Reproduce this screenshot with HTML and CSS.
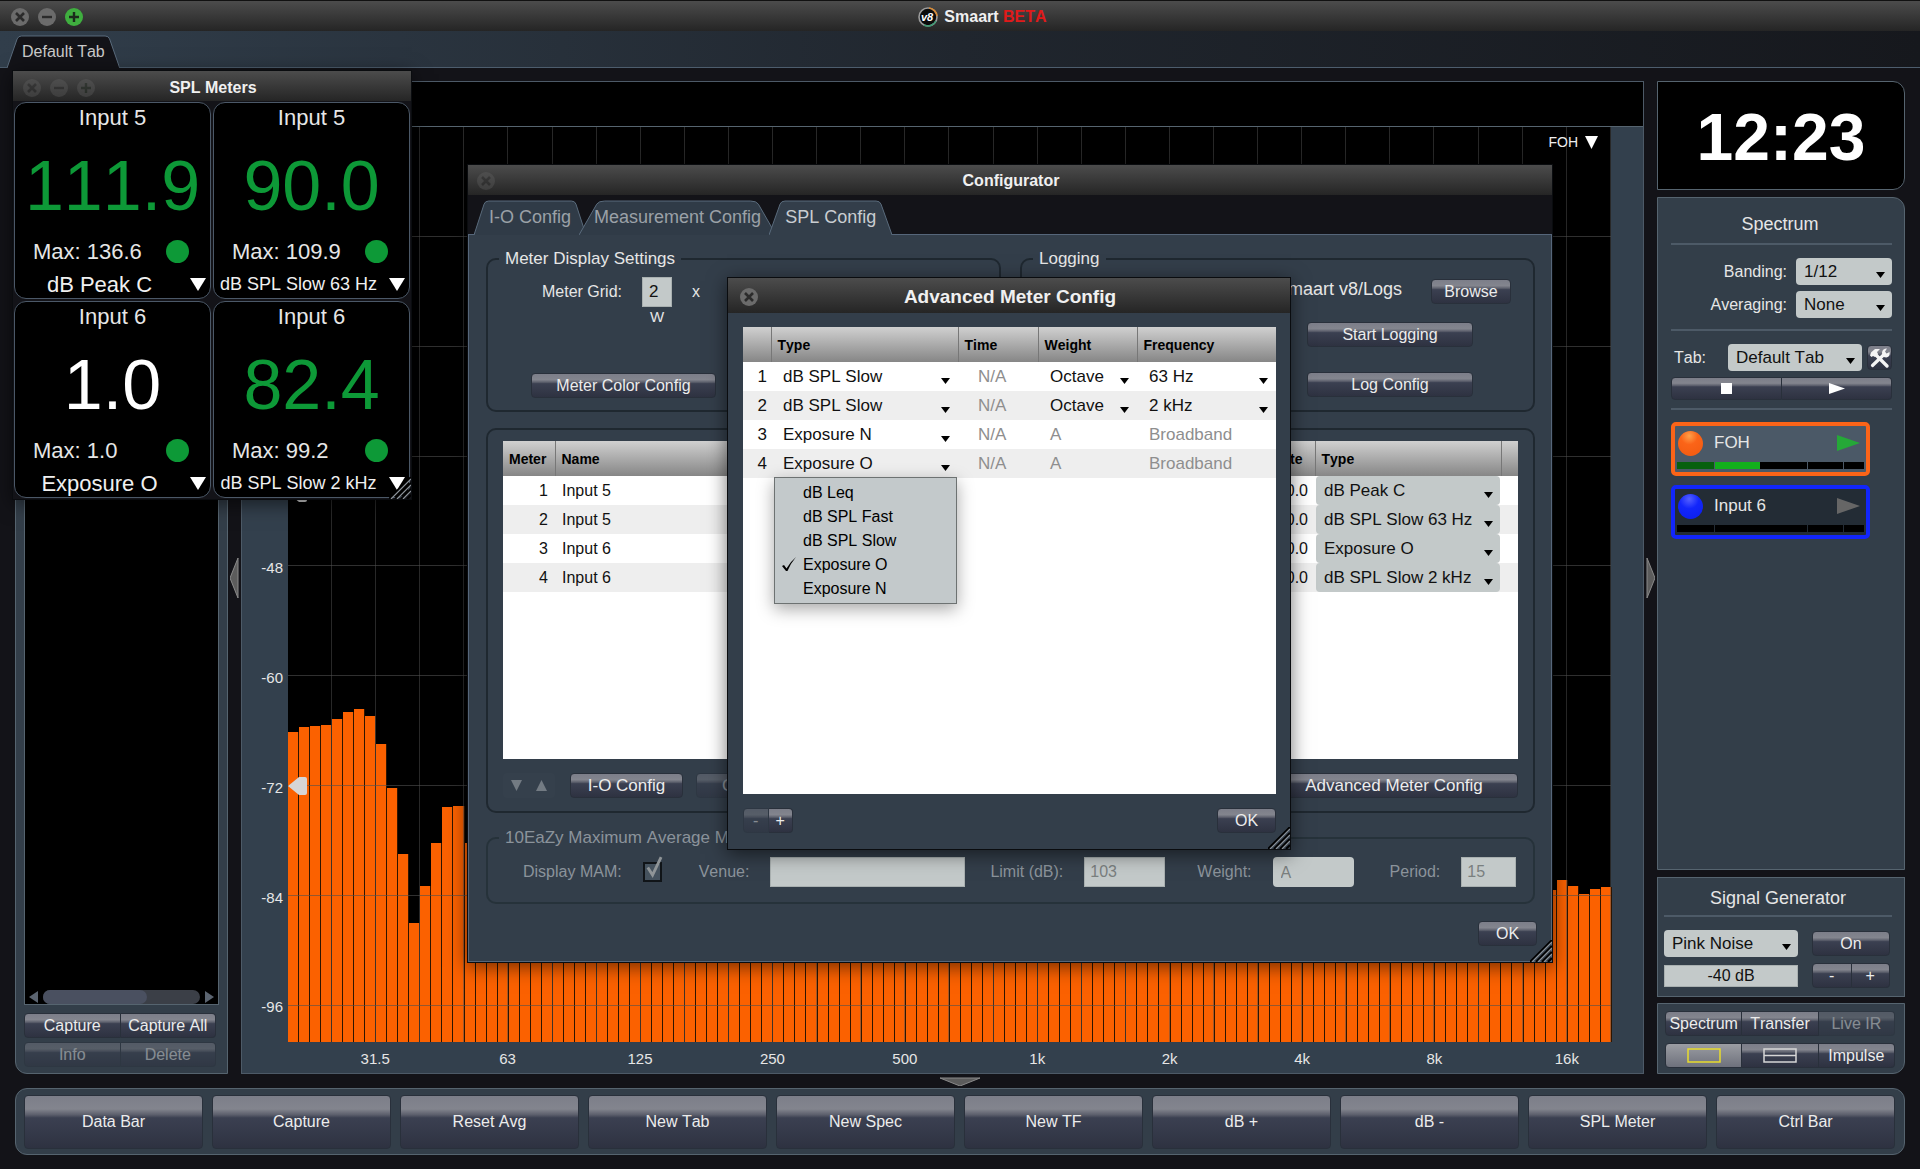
FILE: index.html
```html
<!DOCTYPE html>
<html lang="en">
<head>
    <meta charset="UTF-8">
    <meta name="viewport" content="width=device-width, initial-scale=1.0">
    <title>Smaart</title>
    <link rel="stylesheet" href="styles.css">
</head>
<body>
    <!-- shared icons -->
    <svg class="defs" width="0" height="0" aria-hidden="true">
        <symbol id="i-close" viewBox="0 0 18 18"><circle cx="9" cy="9" r="9" fill="currentColor"/><path d="M5 5l8 8M13 5l-8 8" stroke="#2b2b2b" stroke-width="2.6"/></symbol>
        <symbol id="i-min" viewBox="0 0 18 18"><circle cx="9" cy="9" r="9" fill="currentColor"/><path d="M4 9h10" stroke="#2b2b2b" stroke-width="2.4"/></symbol>
        <symbol id="i-max" viewBox="0 0 18 18"><circle cx="9" cy="9" r="9" fill="currentColor"/><path d="M4 9h10M9 4v10" stroke="#1c2b1c" stroke-width="2.4"/></symbol>
        <symbol id="i-grip" viewBox="0 0 22 22"><path d="M0 22L22 0M6 22L22 6M12 22L22 12M18 22L22 18" stroke="#000" stroke-width="2"/><path d="M2 22L22 2M8 22L22 8M14 22L22 14" stroke="#8d949b" stroke-width="1.2"/></symbol>
        <symbol id="i-tab" viewBox="0 0 100 34" preserveAspectRatio="none"><path d="M0 34L9 4Q10 1 13 1L87 1Q90 1 91 4L100 34" stroke="#5a6b7c" vector-effect="non-scaling-stroke"/></symbol>
    </svg>

    <div class="app">
        <header class="titlebar main-title">
            <div class="win-buttons">
                <button aria-label="Close"><svg><use href="#i-close"/></svg></button>
                <button aria-label="Minimize"><svg><use href="#i-min"/></svg></button>
                <button class="green" aria-label="Zoom"><svg><use href="#i-max"/></svg></button>
            </div>
            <svg class="logo" viewBox="0 0 22 22" aria-hidden="true">
                <circle cx="11" cy="11" r="9" fill="#0b0b0b" stroke="#9b9b9b" stroke-width="1.6"/>
                <path d="M12 2a9 9 0 0 1 8 8" fill="none" stroke="#d98a33" stroke-width="1.6"/>
                <path d="M19 15a9 9 0 0 1-12 4" fill="none" stroke="#3b9a72" stroke-width="1.6"/>
                <text x="10" y="15" text-anchor="middle">v8</text>
            </svg>
            <h1>Smaart <span>BETA</span></h1>
        </header>

        <nav class="tabbar">
            <button class="tab dark"><svg><use href="#i-tab"/></svg><span>Default Tab</span></button>
        </nav>

        <main class="workspace">
            <aside class="panel data-bar">
                <div class="data-list">
                    <div class="scrollbar">
                        <svg width="9" height="12"><path d="M9 0v12L0 6z" fill="#5b6470"/></svg>
                        <div class="track"><div class="thumb"></div></div>
                        <svg width="9" height="12"><path d="M0 0v12l9-6z" fill="#5b6470"/></svg>
                    </div>
                </div>
                <div class="btn-group"><button class="btn">Capture</button><button class="btn">Capture All</button></div>
                <div class="btn-group"><button class="btn" disabled>Info</button><button class="btn" disabled>Delete</button></div>
            </aside>

            <div class="splitter"><svg width="9" height="40"><path d="M8 0v40L0 20z" fill="#5c5c5c" stroke="#8a8a8a"/></svg></div>

            <section class="graph">
                <div class="cursor-strip"></div>
                <div class="plot-row">
                    <div class="y-axis" id="yAxis"></div>
                    <div class="plot">
                        <div class="bars" id="bars"></div>
                        <div class="grid-v" id="gridV"></div>
                        <div class="grid-h" id="gridH"></div>
                        <svg class="handle top-handle" viewBox="0 0 19 18"><path d="M0 9L11 0H17Q19 0 19 2V16Q19 18 17 18H11z" fill="#d6d6d6"/></svg>
                        <svg class="handle low-handle" viewBox="0 0 19 18"><path d="M0 9L11 0H17Q19 0 19 2V16Q19 18 17 18H11z" fill="#d6d6d6"/></svg>
                        <button class="trace-menu">FOH <svg width="13" height="13"><path d="M0 0h13L6.500 13z" fill="#fff"/></svg></button>
                    </div>
                    <div class="plot-margin"></div>
                </div>
                <div class="x-axis">
                    <span>31.5</span><span>63</span><span>125</span><span>250</span><span>500</span><span>1k</span><span>2k</span><span>4k</span><span>8k</span><span>16k</span>
                </div>
            </section>

            <div class="splitter"><svg width="9" height="40"><path d="M1 0v40l8-20z" fill="#5c5c5c" stroke="#8a8a8a"/></svg></div>

            <aside class="control-bar">
                <div class="clock">12:23</div>

                <section class="panel spectrum">
                    <h2>Spectrum</h2>
                    <hr>
                    <div class="field">
                        <label for="banding">Banding:</label>
                        <select id="banding"><option>1/12</option></select>
                    </div>
                    <div class="field">
                        <label for="averaging">Averaging:</label>
                        <select id="averaging"><option>None</option></select>
                    </div>
                    <hr>
                    <div class="field tab-field">
                        <label for="tabSelect">Tab:</label>
                        <select id="tabSelect"><option>Default Tab</option></select>
                        <button class="btn tools" aria-label="Settings">
                            <svg width="22" height="22" viewBox="0 0 22 22">
                                <path d="M6 7L18 19" stroke="#f4f4f4" stroke-width="3.400" stroke-linecap="round"/>
                                <path d="M1 8.500L2 5.500 6 2h5l-3 3 1 2-3 3-2-1-1.500 1z" fill="#f4f4f4"/>
                                <path d="M3.500 18.500L15 7.500" stroke="#f4f4f4" stroke-width="3.200" stroke-linecap="round"/>
                                <path d="M13 5.500Q13.500 1.500 18 1.500L16 4.500 17.500 6.500 20.500 5Q21.500 9.500 17.500 10.500 13 10.500 13 5.500z" fill="#f4f4f4"/>
                            </svg>
                        </button>
                    </div>
                    <div class="btn-group transport">
                        <button class="btn" aria-label="Stop"><svg width="11" height="11"><rect width="11" height="11" fill="#fff"/></svg></button>
                        <button class="btn" aria-label="Play"><svg width="16" height="11"><path d="M0 0v11l16-5.500z" fill="#fff"/></svg></button>
                    </div>
                    <hr>
                    <div class="channel orange">
                        <div class="channel-head">
                            <i class="ball"></i><span>FOH</span>
                            <svg width="23" height="16"><path d="M0 0v16l23-8z" fill="#25a838"/></svg>
                        </div>
                        <div class="level"><i class="low"></i><i class="mid"></i><i></i><i></i></div>
                    </div>
                    <div class="channel blue">
                        <div class="channel-head">
                            <i class="ball"></i><span>Input 6</span>
                            <svg width="23" height="16"><path d="M0 0v16l23-8z" fill="#666"/></svg>
                        </div>
                        <div class="level"><i></i><i></i><i></i><i></i></div>
                    </div>
                </section>

                <section class="panel generator">
                    <h2>Signal Generator</h2>
                    <hr>
                    <div class="gen-grid">
                        <select aria-label="Signal"><option>Pink Noise</option></select>
                        <button class="btn">On</button>
                        <input type="text" value="-40 dB" aria-label="Level">
                        <div class="btn-group"><button class="btn">-</button><button class="btn">+</button></div>
                    </div>
                </section>

                <section class="panel modes">
                    <div class="btn-group"><button class="btn">Spectrum</button><button class="btn">Transfer</button><button class="btn" disabled>Live IR</button></div>
                    <div class="btn-group">
                        <button class="btn active" aria-label="Single view"><svg width="34" height="16"><rect x="1" y="1" width="32" height="13" fill="none" stroke="#e8dc2c" stroke-width="1.500"/></svg></button>
                        <button class="btn" aria-label="Split view"><svg width="34" height="16"><path d="M1 1h32v13H1zM1 7.500h32" fill="none" stroke="#d6d6d6" stroke-width="1.500"/></svg></button>
                        <button class="btn">Impulse</button>
                    </div>
                </section>
            </aside>
        </main>

        <div class="bottom-splitter"><svg width="40" height="9"><path d="M0 1h40L20 9z" fill="#5c5c5c" stroke="#8a8a8a"/></svg></div>

        <footer class="panel command-bar">
            <button class="btn">Data Bar</button>
            <button class="btn">Capture</button>
            <button class="btn">Reset Avg</button>
            <button class="btn">New Tab</button>
            <button class="btn">New Spec</button>
            <button class="btn">New TF</button>
            <button class="btn">dB +</button>
            <button class="btn">dB -</button>
            <button class="btn">SPL Meter</button>
            <button class="btn">Ctrl Bar</button>
        </footer>
    </div>

    <!-- SPL meters window -->
    <div class="window spl-window">
        <div class="titlebar inactive">
            <div class="win-buttons">
                <button aria-label="Close"><svg><use href="#i-close"/></svg></button>
                <button aria-label="Minimize"><svg><use href="#i-min"/></svg></button>
                <button aria-label="Zoom"><svg><use href="#i-max"/></svg></button>
            </div>
            <h2>SPL Meters</h2>
        </div>
        <div class="meters">
            <div class="meter">
                <div class="name">Input 5</div>
                <div class="value">111.9</div>
                <div class="max">Max: 136.6<i></i></div>
                <select aria-label="Meter 1 type"><option>dB Peak C</option></select>
            </div>
            <div class="meter">
                <div class="name">Input 5</div>
                <div class="value">90.0</div>
                <div class="max">Max: 109.9<i></i></div>
                <select class="small" aria-label="Meter 2 type"><option>dB SPL Slow 63 Hz</option></select>
            </div>
            <div class="meter">
                <div class="name">Input 6</div>
                <div class="value white">1.0</div>
                <div class="max">Max: 1.0<i></i></div>
                <select aria-label="Meter 3 type"><option>Exposure O</option></select>
            </div>
            <div class="meter">
                <div class="name">Input 6</div>
                <div class="value">82.4</div>
                <div class="max">Max: 99.2<i></i></div>
                <select class="small" aria-label="Meter 4 type"><option>dB SPL Slow 2 kHz</option></select>
            </div>
        </div>
        <svg class="grip"><use href="#i-grip"/></svg>
    </div>

    <!-- Configurator window -->
    <div class="window config-window">
        <div class="titlebar inactive">
            <div class="win-buttons"><button aria-label="Close"><svg><use href="#i-close"/></svg></button></div>
            <h2>Configurator</h2>
        </div>
        <nav class="config-tabs">
            <button class="tab"><svg><use href="#i-tab"/></svg><span>I-O Config</span></button>
            <button class="tab"><svg><use href="#i-tab"/></svg><span>Measurement Config</span></button>
            <button class="tab current"><svg><use href="#i-tab"/></svg><span>SPL Config</span></button>
        </nav>
        <div class="config-body">
            <div class="top-groups">
                <fieldset>
                    <legend>Meter Display Settings</legend>
                    <div class="meter-grid">
                        <label for="gridW">Meter Grid:</label>
                        <div class="dim"><input type="text" id="gridW" value="2"><span>W</span></div>
                        <span>x</span>
                    </div>
                    <button class="btn color-btn">Meter Color Config</button>
                </fieldset>
                <fieldset>
                    <legend>Logging</legend>
                    <div class="log-path"><span>~/Documents/Smaart v8/Logs</span><button class="btn">Browse</button></div>
                    <button class="btn log-btn">Start Logging</button>
                    <button class="btn log-btn last">Log Config</button>
                </fieldset>
            </div>

            <div class="group">
                <div class="table-box">
                    <table class="meter-table">
                        <colgroup><col class="c-num"><col class="c-name"><col><col class="c-type"><col class="c-end"></colgroup>
                        <thead><tr><th>Meter</th><th>Name</th><th class="right">Calibrate</th><th>Type</th><th></th></tr></thead>
                        <tbody>
                            <tr><td class="right">1</td><td>Input 5</td><td class="right">100.0</td><td><select aria-label="Type 1"><option>dB Peak C</option></select></td><td></td></tr>
                            <tr><td class="right">2</td><td>Input 5</td><td class="right">100.0</td><td><select aria-label="Type 2"><option>dB SPL Slow 63 Hz</option></select></td><td></td></tr>
                            <tr><td class="right">3</td><td>Input 6</td><td class="right">100.0</td><td><select aria-label="Type 3"><option>Exposure O</option></select></td><td></td></tr>
                            <tr><td class="right">4</td><td>Input 6</td><td class="right">100.0</td><td><select aria-label="Type 4"><option>dB SPL Slow 2 kHz</option></select></td><td></td></tr>
                        </tbody>
                    </table>
                </div>
                <div class="table-actions">
                    <div class="btn-group faint">
                        <button class="btn" disabled aria-label="Move down"><svg width="11" height="11"><path d="M0 0h11L5.500 11z" fill="#fff"/></svg></button>
                        <button class="btn" disabled aria-label="Move up"><svg width="11" height="11"><path d="M0 11h11L5.500 0z" fill="#fff"/></svg></button>
                    </div>
                    <button class="btn io-btn">I-O Config</button>
                    <button class="btn cal-btn" disabled>Calibrate</button>
                    <button class="btn adv-btn">Advanced Meter Config</button>
                </div>
            </div>

            <fieldset class="mam" disabled>
                <legend>10EaZy Maximum Average Manager</legend>
                <div class="mam-row">
                    <label for="mam">Display MAM:</label>
                    <span class="check"><input type="checkbox" id="mam" checked><svg viewBox="0 0 20 24"><path d="M4 12l5 8L18 1" fill="none" stroke="#8f9497" stroke-width="3"/></svg></span>
                    <label for="venue">Venue:</label><input type="text" id="venue" class="w-venue">
                    <label for="limit">Limit (dB):</label><input type="text" id="limit" class="w-limit" value="103">
                    <label for="weight">Weight:</label><select id="weight"><option>A</option></select>
                    <label for="period">Period:</label><input type="text" id="period" class="w-period" value="15">
                </div>
            </fieldset>
            <button class="btn ok">OK</button>
        </div>
        <svg class="grip"><use href="#i-grip"/></svg>
    </div>

    <!-- Advanced meter config dialog -->
    <div class="window adv-window">
        <div class="titlebar">
            <div class="win-buttons"><button aria-label="Close"><svg><use href="#i-close"/></svg></button></div>
            <h2>Advanced Meter Config</h2>
        </div>
        <div class="adv-body">
            <div class="table-box">
                <table class="adv-table">
                    <colgroup><col class="a-num"><col class="a-type"><col class="a-time"><col class="a-weight"><col></colgroup>
                    <thead><tr><th></th><th>Type</th><th>Time</th><th>Weight</th><th>Frequency</th></tr></thead>
                    <tbody>
                        <tr><td>1</td><td><select aria-label="Type 1"><option>dB SPL Slow</option></select></td><td class="off time">N/A</td><td><select aria-label="Weight 1"><option>Octave</option></select></td><td><select aria-label="Frequency 1"><option>63 Hz</option></select></td></tr>
                        <tr><td>2</td><td><select aria-label="Type 2"><option>dB SPL Slow</option></select></td><td class="off time">N/A</td><td><select aria-label="Weight 2"><option>Octave</option></select></td><td><select aria-label="Frequency 2"><option>2 kHz</option></select></td></tr>
                        <tr><td>3</td><td><select aria-label="Type 3"><option>Exposure N</option></select></td><td class="off time">N/A</td><td class="off">A</td><td class="off">Broadband</td></tr>
                        <tr><td>4</td><td><select aria-label="Type 4"><option>Exposure O</option></select></td><td class="off time">N/A</td><td class="off">A</td><td class="off">Broadband</td></tr>
                    </tbody>
                </table>
                <ul class="menu" role="listbox">
                    <li>dB Leq</li>
                    <li>dB SPL Fast</li>
                    <li>dB SPL Slow</li>
                    <li class="checked"><svg viewBox="0 0 14 15"><path d="M0 9l2-1 2.500 3.500Q8 5 14 0 8.500 6.500 5.500 14H4z"/></svg>Exposure O</li>
                    <li>Exposure N</li>
                </ul>
            </div>
            <div class="adv-footer">
                <div class="btn-group"><button class="btn" disabled>-</button><button class="btn">+</button></div>
                <button class="btn">OK</button>
            </div>
        </div>
        <svg class="grip"><use href="#i-grip"/></svg>
    </div>

    <script src="script.js"></script>
</body>
</html>
```
FILE: styles.css
```css
* {
    box-sizing: border-box;
    font-kerning: none;
}

body {
    margin: 0;
    background-color: #131318;
    color: #e6e6e6;
    font-family: "Liberation Sans", Arial, sans-serif;
    font-size: 16px;
}

h1, h2 {
    margin: 0;
    font-size: 16px;
}

button, input, select {
    font-family: inherit;
    font-size: inherit;
    margin: 0;
}

svg {
    display: block;
}

.defs {
    position: absolute;
}

.app {
    display: flex;
    flex-direction: column;
    min-height: 100vh;
    padding-bottom: 14px;
}

/* title bars */
.titlebar {
    position: relative;
    display: flex;
    align-items: center;
    justify-content: center;
    height: 30px;
    flex: none;
    padding-top: 2px;
    background: linear-gradient(#4c4c4c, #252525);
    color: #f0f0f0;
}

.main-title {
    height: 31px;
    gap: 5px;
    padding-left: 44px;
    border-top: 1px solid #111;
}

.main-title span {
    color: #e01a1a;
}

.logo {
    width: 22px;
    height: 22px;
}

.logo text {
    font-size: 11px;
    font-weight: bold;
    font-style: italic;
    fill: #fff;
}

.win-buttons {
    position: absolute;
    left: 11px;
    display: flex;
    gap: 9px;
}

.win-buttons button {
    width: 18px;
    height: 18px;
    padding: 0;
    border: none;
    background: none;
    color: #6b6b6b;
}

.win-buttons .green {
    color: #3fae3f;
}

.win-buttons svg {
    width: 18px;
    height: 18px;
}

.inactive .win-buttons {
    opacity: 0.3;
}

/* tabs */
.tabbar {
    display: flex;
    align-items: flex-end;
    height: 37px;
    padding-left: 7px;
    background: linear-gradient(90deg, #313e4b, #20262e 50%, #16181d);
    border-bottom: 1px solid #4d5d6d;
}

.tab {
    position: relative;
    height: 35px;
    padding: 0 15px;
    margin-bottom: -1px;
    border: none;
    background: none;
    color: #9ba1a7;
    font-size: 18px;
}

.tab svg {
    position: absolute;
    left: 0;
    top: 0;
    width: 100%;
    height: 100%;
    fill: #303b47;
}

.tab span {
    position: relative;
}

.tab.dark {
    height: 33px;
    color: #c9c9c9;
    font-size: 16px;
}

.tab.dark svg {
    fill: #131318;
}

.tab.current {
    padding: 0 16px;
    color: #c9cdd1;
    z-index: 1;
}

.tab.current svg {
    fill: #333e4a;
}

/* main area */
.workspace {
    display: flex;
    flex: 1;
    padding: 13px 15px 0;
}

.panel {
    background-color: #333e49;
    border: 1px solid #56646f;
}

.splitter {
    display: flex;
    align-items: center;
    justify-content: center;
    width: 13px;
    flex: none;
}

.bottom-splitter {
    display: flex;
    align-items: center;
    justify-content: center;
    height: 14px;
}

.btn {
    padding: 0;
    height: 25px;
    border: 1px solid #29303b;
    border-radius: 4px;
    background: linear-gradient(#7c7e89, #83858e 25%, #5c5f6c 36%, #3b4051 42%, #2e3241);
    color: #ececec;
    white-space: nowrap;
}

.btn svg {
    margin: 0 auto;
}

.btn:disabled {
    opacity: 0.45;
}

.btn.active {
    background: linear-gradient(#9b9da3, #6e717c);
}

.btn-group {
    display: flex;
}

.btn-group .btn {
    flex: 1;
    min-width: 0;
}

.btn-group .btn:not(:first-child) {
    border-top-left-radius: 0;
    border-bottom-left-radius: 0;
    border-left-width: 0;
}

.btn-group .btn:not(:last-child) {
    border-top-right-radius: 0;
    border-bottom-right-radius: 0;
}

select {
    appearance: none;
    height: 27px;
    padding: 0 24px 0 8px;
    border: none;
    border-radius: 4px;
    color: #111;
    font-size: 17px;
    background: #c3c9c9 url("data:image/svg+xml,%3csvg xmlns='http://www.w3.org/2000/svg' width='9' height='6'%3e%3cpath d='M0 0h9L4.500 6z'/%3e%3c/svg%3e") no-repeat right 7px top 14px;
}

input[type="text"] {
    height: 30px;
    padding: 0 5px;
    border: 1px solid #a9b0b0;
    background-color: #c3c9c9;
    color: #111;
}

hr {
    width: 100%;
    height: 2px;
    margin: 0;
    border: none;
    background-color: #4d5a67;
}

/* left data bar */
.data-bar {
    display: flex;
    flex-direction: column;
    gap: 4px;
    width: 213px;
    padding: 8px 11px 6px 8px;
    border-bottom-left-radius: 12px;
}

.data-list {
    display: flex;
    align-items: flex-end;
    flex: 1;
    margin-right: -3px;
    margin-bottom: 4px;
    background-color: #000;
    border: 1px solid #56646f;
}

.scrollbar {
    display: flex;
    align-items: center;
    gap: 5px;
    width: 100%;
    padding: 0 4px;
}

.track {
    flex: 1;
    height: 14px;
    border-radius: 7px;
    background-color: #3b3f47;
}

.thumb {
    width: 66%;
    height: 14px;
    border-radius: 7px;
    background-color: #4a5060;
}

/* spectrum graph */
.graph {
    display: flex;
    flex-direction: column;
    flex: 1;
    min-width: 0;
    background-color: #33404d;
    border: 1px solid #4d5a67;
}

.cursor-strip {
    height: 45px;
    background-color: #000;
    border-bottom: 1px solid #56646f;
}

.plot-row {
    display: flex;
    flex: 1;
}

.y-axis {
    display: flex;
    flex-direction: column;
    width: 46px;
    padding-right: 5px;
    font-size: 15px;
    text-align: right;
}

.y-axis div {
    display: flex;
    align-items: flex-end;
    justify-content: flex-end;
    flex: 12 0 0;
}

.y-axis span {
    margin-bottom: -10px;
}

.plot {
    position: relative;
    flex: 1;
    background-color: #000;
}

.plot-margin {
    width: 32px;
}

.bars, .grid-v, .grid-h {
    position: absolute;
    inset: 0;
    display: flex;
}

.bars {
    align-items: flex-end;
}

.bars i {
    flex: 1;
    background-color: #fb6100;
    border-right: 1px solid #2e1500;
}

.grid-v i {
    flex: 1;
    border-right: 1px solid rgba(80, 80, 80, 0.5);
}

.grid-h {
    flex-direction: column;
}

.grid-h i {
    flex: 12 0 0;
    border-bottom: 1px solid rgba(80, 80, 80, 0.6);
}

.grid-h i:last-child, .y-axis div:last-child {
    flex-grow: 4;
    border: none;
}

.handle {
    position: absolute;
    left: 0;
    width: 19px;
    height: 18px;
    margin-top: -9px;
}

.low-handle {
    top: 72%;
}

.top-handle {
    top: 40%;
}

.trace-menu {
    position: absolute;
    right: 13px;
    top: 7px;
    display: flex;
    align-items: center;
    gap: 7px;
    padding: 0;
    border: none;
    background: none;
    color: #eee;
    font-size: 14px;
}

.x-axis {
    display: flex;
    height: 31px;
    padding: 8px 10px 0 67px;
    font-size: 15px;
}

.x-axis span {
    flex: 1;
    text-align: center;
}

/* right control bar */
.control-bar {
    display: flex;
    flex-direction: column;
    gap: 7px;
    width: 248px;
    flex: none;
}

.clock {
    height: 109px;
    line-height: 110px;
    border: 1px solid #56646f;
    border-radius: 0 12px 12px 0;
    background-color: #000;
    color: #fff;
    font-size: 66px;
    font-weight: bold;
    text-align: center;
}

.panel h2 {
    font-size: 18px;
    font-weight: normal;
    text-align: center;
}

.spectrum {
    flex: 1;
    padding: 16px 12px 0 13px;
    border-top-right-radius: 12px;
}

.spectrum h2 {
    height: 29px;
    padding-right: 3px;
}

.spectrum hr + .field {
    margin-top: 13px;
}

.field {
    display: flex;
    align-items: center;
    justify-content: flex-end;
    gap: 9px;
    margin-top: 6px;
}

.field select {
    width: 96px;
}

.field + hr {
    margin-top: 11px;
}

.tab-field {
    gap: 5px;
}

.tab-field label {
    flex: 1;
    padding-left: 3px;
}

.tab-field select {
    width: 134px;
}

.tools {
    width: 25px;
}

.transport {
    margin: 6px 0 8px;
}

.transport .btn {
    height: 23px;
}

.channel {
    width: 199px;
    height: 54px;
    margin-top: 12px;
    padding: 0 2px;
    border: 4px solid #fb6418;
    border-radius: 5px;
    background-color: #4b5967;
    font-size: 17px;
}

.channel.blue {
    margin-top: 9px;
    border-color: #1226fb;
    background-color: #232c35;
}

.channel-head {
    display: flex;
    align-items: center;
    gap: 11px;
    height: 34px;
    padding: 0 4px 0 1px;
}

.channel-head span {
    flex: 1;
}

.ball {
    width: 25px;
    height: 25px;
    border-radius: 50%;
    background: radial-gradient(circle at 45% 20%, #ffa04a, #fb6418 35%, #f05a10);
}

.blue .ball {
    background: radial-gradient(circle at 45% 20%, #5560ff, #1226fb 40%, #0c1eea);
}

.level {
    display: flex;
    gap: 1px;
    height: 7px;
    margin-top: 2px;
}

.level i {
    background-color: #000;
}

.level i:nth-child(1) { flex: 37; }
.level i:nth-child(2) { flex: 91; }
.level i:nth-child(3) { flex: 35; }
.level i:nth-child(4) { flex: 20; }

.level .low {
    background-color: #07600e;
}

.level .mid {
    background: linear-gradient(90deg, #12b01c 49%, #000 49%);
}

.generator {
    height: 120px;
    padding: 10px 12px 0 6px;
}

.generator h2 {
    height: 27px;
}

.gen-grid {
    display: grid;
    grid-template-columns: 134px 78px;
    column-gap: 14px;
    row-gap: 6px;
    align-items: center;
    margin-top: 13px;
}

.gen-grid input {
    height: 22px;
    text-align: center;
}

.modes {
    display: flex;
    flex-direction: column;
    gap: 7px;
    height: 71px;
    margin-top: -1px;
    padding: 7px 9px 0 7px;
    border-bottom-right-radius: 12px;
}

/* bottom command bar */
.command-bar {
    display: flex;
    gap: 9px;
    height: 67px;
    margin: 0 15px;
    padding: 6px 9px 6px 8px;
    border-radius: 12px;
}

.command-bar .btn {
    flex: 1;
    height: 54px;
}

/* floating windows */
.window {
    position: absolute;
    border: 1px solid #0a0c0f;
    box-shadow: 0 4px 18px rgba(0, 0, 0, 0.55);
}

.grip {
    position: absolute;
    right: 0;
    bottom: 0;
    width: 22px;
    height: 22px;
}

.spl-window {
    left: 12px;
    top: 70px;
    width: 400px;
    background-color: #131318;
}

.spl-window .titlebar {
    padding-top: 3px;
}

.spl-window h2 {
    padding-left: 2px;
}

.spl-window .win-buttons {
    left: 10px;
}

.meters {
    display: grid;
    grid-template-columns: 1fr 1fr;
    gap: 2px;
    padding: 1px;
}

.meter {
    display: flex;
    flex-direction: column;
    height: 197px;
    border: 1px solid #4b5867;
    border-radius: 12px;
    background-color: #000;
    font-size: 22px;
    text-align: center;
}

.meter .name {
    height: 30px;
    line-height: 30px;
}

.meter .value {
    height: 106px;
    line-height: 106px;
    color: #0d9937;
    font-size: 70px;
}

.meter .value.white {
    color: #fff;
}

.meter .max {
    display: flex;
    align-items: center;
    justify-content: space-between;
    height: 25px;
    padding: 0 21px 0 18px;
}

.meter .max i {
    width: 23px;
    height: 23px;
    border-radius: 50%;
    background-color: #0d9937;
}

.meter select {
    height: 28px;
    margin-top: 6px;
    padding: 0 26px 0 0;
    color: #f0f0f0;
    font-size: 22px;
    text-align-last: center;
    background: url("data:image/svg+xml,%3csvg xmlns='http://www.w3.org/2000/svg' width='16' height='13'%3e%3cpath d='M0 0h16L8 13z' fill='%23fff'/%3e%3c/svg%3e") no-repeat right 4px center;
}

.meter select.small {
    font-size: 18px;
}

/* configurator */
.config-window {
    left: 467px;
    top: 164px;
    width: 1086px;
    background-color: #131318;
}

.config-window .titlebar {
    padding-left: 2px;
}

.config-window .win-buttons {
    left: 9px;
}

.config-tabs {
    display: flex;
    align-items: flex-end;
    height: 39px;
    padding-left: 6px;
}

.config-tabs .tab + .tab {
    margin-left: -7px;
}

.config-body {
    display: flex;
    flex-direction: column;
    height: 728px;
    padding: 14px 16px 0 17px;
    border: 1px solid #56667a;
    background-color: #333e4a;
}

fieldset, .group {
    min-width: 0;
    margin: 0;
    padding: 0;
    border: 2px solid #1f2830;
    border-radius: 10px;
}

legend {
    height: 20px;
    line-height: 20px;
    margin-left: 11px;
    padding: 0 6px;
    font-size: 17px;
}

.top-groups {
    display: grid;
    grid-template-columns: 1fr 1fr;
    gap: 19px;
    height: 163px;
}

.meter-grid {
    display: flex;
    gap: 20px;
    height: 50px;
    line-height: 30px;
    margin: 8px 0 46px 54px;
}

.dim {
    display: flex;
    flex-direction: column;
    align-items: center;
    line-height: 20px;
    font-size: 15px;
}

.dim input {
    width: 30px;
    padding: 0 6px;
    font-size: 17px;
}

.color-btn {
    width: 185px;
    margin-left: 43px;
}

.log-path {
    display: flex;
    justify-content: flex-end;
    gap: 29px;
    line-height: 20px;
    margin: 10px 22px 18px 0;
    font-size: 18px;
}

.log-path .btn {
    width: 80px;
    font-size: 16px;
}

.log-btn {
    display: block;
    width: 166px;
    margin-left: auto;
    margin-right: 60px;
}

.log-btn.last {
    margin-top: 25px;
}

.group {
    margin-top: 16px;
    padding: 11px 15px 13px;
}

.table-box {
    position: relative;
    background-color: #fff;
}

.group .table-box {
    height: 318px;
}

table {
    width: 100%;
    table-layout: fixed;
    border-collapse: collapse;
    color: #111;
    font-size: 17px;
}

thead tr {
    background: linear-gradient(#d0d0d0, #868686);
}

th {
    height: 35px;
    padding: 0 6px;
    border-left: 1px solid #777;
    color: #000;
    font-size: 14px;
    text-align: left;
}

th:first-child {
    border-left: none;
}

tbody tr {
    height: 29px;
}

tbody tr:nth-child(even) {
    background-color: #eee;
}

td {
    height: 29px;
    padding: 0 7px;
}

.right {
    text-align: right;
}

.c-num { width: 52px; }
.c-name { width: 190px; }
.c-type { width: 186px; }
.c-end { width: 17px; }

.meter-table {
    font-size: 16px;
}

.meter-table th.right {
    padding-right: 12px;
}

td select {
    display: block;
    width: 100%;
    height: 29px;
    background-position: right 8px top 16px;
}

.meter-table td:nth-child(4) {
    padding: 0 1px;
}

.meter-table select {
    padding-left: 8px;
    background-position: right 7px top 16px;
}

.table-actions {
    display: flex;
    align-items: center;
    margin-top: 14px;
    font-size: 17px;
}

.table-actions .btn-group {
    width: 52px;
}

.faint {
    opacity: 0.7;
}

.faint .btn {
    border-color: transparent;
    background: #3b4652;
}

.io-btn {
    width: 113px;
    margin-left: 15px;
}

.cal-btn {
    width: 120px;
    margin-left: 13px;
}

.adv-btn {
    width: 248px;
    margin-left: auto;
}

.mam {
    height: 76px;
    margin-top: 15px;
    border-color: #26323a;
    color: #8b939b;
}

.mam-row {
    display: flex;
    align-items: center;
    height: 48px;
    padding-left: 35px;
}

.mam-row > * {
    flex: none;
}

.mam label {
    margin-right: 21px;
}

.mam-row input, .mam-row select {
    height: 30px;
    margin-right: 25px;
    color: #7a7f7f;
    opacity: 1;
}

.mam .check {
    position: relative;
    width: 19px;
    margin-right: 37px;
}

.mam .check input {
    appearance: none;
    display: block;
    width: 19px;
    height: 20px;
    margin: 0;
    border: 2px solid #101418;
    background-color: #45525e;
}

.check svg {
    position: absolute;
    left: 1px;
    top: -6px;
    width: 19px;
    height: 23px;
}

.mam .w-venue { width: 195px; }
.mam .w-limit { width: 81px; margin-right: 32px; }

.mam select {
    width: 81px;
    margin-right: 36px;
    background-image: none;
    font-size: 16px;
}

.mam .w-period { width: 55px; margin-right: 0; }

.ok {
    width: 59px;
    margin: 17px -2px 0 auto;
}

/* advanced meter config */
.adv-window {
    left: 727px;
    top: 277px;
    width: 564px;
    background-color: #333e4a;
}

.adv-window .titlebar {
    height: 35px;
    padding-left: 2px;
}

.adv-window .win-buttons {
    left: 12px;
}

.adv-window h2 {
    font-size: 19px;
}

.adv-body {
    padding: 14px 14px 16px 15px;
}

.adv-body .table-box {
    height: 467px;
}

.a-num { width: 28px; }
.a-type { width: 187px; }
.a-time { width: 80px; }
.a-weight { width: 99px; }

.adv-table td:first-child {
    padding: 0 4px 0 0;
    text-align: right;
}

.adv-table td {
    padding: 0;
}

.adv-table select {
    padding-left: 12px;
    background-color: transparent;
}

.adv-table .off {
    padding-left: 12px;
    color: #8e8e8e;
}

.adv-table .time {
    padding-left: 20px;
}

.menu {
    position: absolute;
    left: 31px;
    top: 150px;
    width: 183px;
    margin: 0;
    padding: 3px 0 2px;
    border: 1px solid #6d7272;
    background-color: #c3c9cb;
    box-shadow: 0 5px 16px rgba(0, 0, 0, 0.35);
    color: #000;
    list-style: none;
}

.menu li {
    position: relative;
    height: 24px;
    line-height: 24px;
    padding-left: 28px;
}

.menu svg {
    position: absolute;
    left: 7px;
    top: 4px;
    width: 14px;
    height: 15px;
}

.adv-footer {
    display: flex;
    justify-content: space-between;
    margin-top: 14px;
}

.adv-footer .btn-group {
    width: 50px;
}

.adv-footer > .btn {
    width: 59px;
}
```
FILE: script.js
```js
// level of each 1/12 octave band, in dB
const head = [66.1, 65.6, 65.5, 65.4, 64.7, 63.9, 63.6, 64.4, 67.4, 72.2, 79.4, 87, 83, 78.3, 74.3, 74.2, 78.3];
const tail = [83.4, 82.3, 83, 83.8, 83.3, 83.1];
const levels = head.concat(new Array(120 - head.length - tail.length).fill(82), tail);

const bars = document.getElementById("bars");
levels.forEach(level => {
    const bar = document.createElement("i");
    bar.style.height = (100 - level) + "%";
    bars.appendChild(bar);
});

const gridV = document.getElementById("gridV");
for (let i = 0; i < 30; i++) {
    gridV.appendChild(document.createElement("i"));
}

// one row for every 12 dB, the last one is cut at -100
const gridH = document.getElementById("gridH");
const yAxis = document.getElementById("yAxis");
for (let db = -12; db >= -108; db -= 12) {
    gridH.appendChild(document.createElement("i"));
    const row = document.createElement("div");
    if (db <= -48 && db >= -96) {
        const label = document.createElement("span");
        label.textContent = db;
        row.appendChild(label);
    }
    yAxis.appendChild(row);
}
```
